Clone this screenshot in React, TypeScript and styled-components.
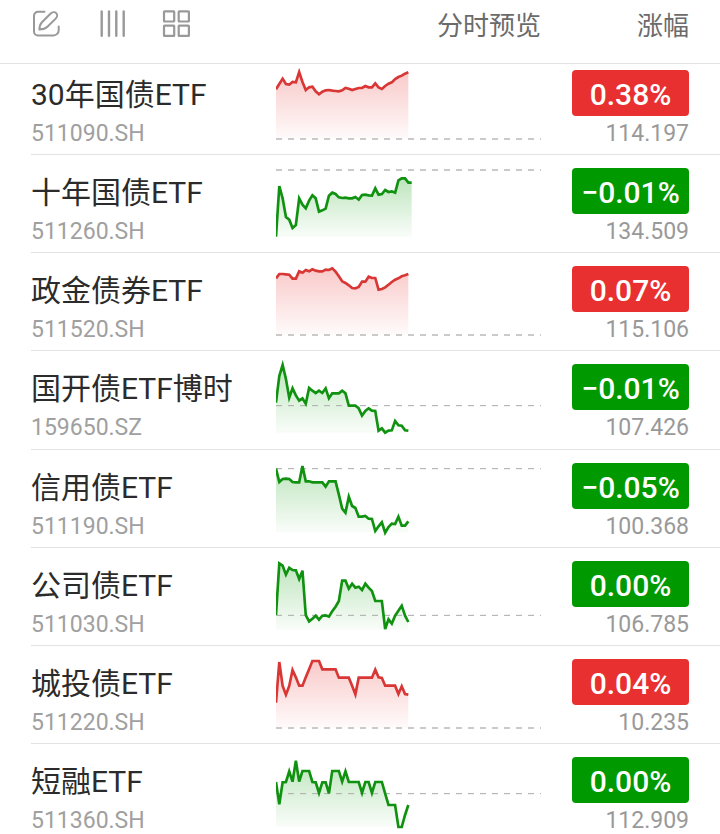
import React from "react";
import styled, { createGlobalStyle } from "styled-components";

type Trend = "up" | "down";

interface Fund {
  name: string;
  code: string;
  change: string;
  price: string;
  trend: Trend;
  /** Height of the previous close and of the area's foot, in chart units. */
  close: number;
  foot: number;
  span: number;
  points: number[];
}

const CHART_WIDTH = 795;
const CHART_HEIGHT = 291;

const lineColor = { up: "#d93636", down: "#109210" };
const badgeColor = { up: "#e93030", down: "#009a00" };

const funds: Fund[] = [
  {
    name: "30年国债ETF", code: "511090.SH", change: "0.38%", price: "114.197",
    trend: "up", close: 246, foot: 246, span: 397,
    points: [97, 81, 65, 81, 83, 75, 76, 45, 75, 99, 91, 89, 103, 112, 104, 100, 99, 101, 102, 103, 100, 93, 95, 99, 96, 93, 93, 87, 91, 91, 79, 91, 96, 87, 80, 76, 66, 60, 56, 50, 46],
  },
  {
    name: "十年国债ETF", code: "511260.SH", change: "−0.01%", price: "134.509",
    trend: "down", close: 45, foot: 246, span: 407,
    points: [245, 93, 130, 186, 194, 219, 210, 130, 149, 160, 137, 121, 130, 170, 166, 161, 122, 113, 117, 127, 129, 128, 130, 130, 126, 134, 120, 119, 121, 122, 100, 119, 117, 105, 111, 109, 113, 76, 70, 70, 83, 83],
  },
  {
    name: "政金债券ETF", code: "511520.SH", change: "0.07%", price: "115.106",
    trend: "up", close: 246, foot: 246, span: 397,
    points: [76, 63, 63, 64, 65, 77, 77, 55, 59, 51, 55, 49, 53, 55, 55, 50, 51, 46, 56, 70, 85, 90, 97, 105, 106, 102, 86, 86, 71, 75, 75, 110, 108, 103, 95, 87, 80, 76, 70, 67, 63],
  },
  {
    name: "国开债ETF博时", code: "159650.SZ", change: "−0.01%", price: "107.426",
    trend: "down", close: 164, foot: 247, span: 397,
    points: [155, 75, 42, 84, 140, 112, 133, 149, 142, 158, 111, 119, 126, 119, 126, 112, 142, 127, 127, 127, 119, 127, 164, 164, 164, 172, 194, 180, 172, 179, 180, 239, 232, 245, 239, 238, 210, 223, 224, 238, 239],
  },
  {
    name: "信用债ETF", code: "511190.SH", change: "−0.05%", price: "100.368",
    trend: "down", close: 56, foot: 247, span: 397,
    points: [56, 96, 87, 86, 87, 96, 97, 97, 48, 94, 94, 97, 97, 97, 97, 110, 94, 94, 94, 134, 176, 188, 140, 168, 174, 200, 200, 198, 206, 207, 243, 229, 217, 248, 231, 221, 222, 200, 227, 227, 214],
  },
  {
    name: "公司债ETF", code: "511030.SH", change: "0.00%", price: "106.785",
    trend: "down", close: 202, foot: 246, span: 397,
    points: [201, 46, 53, 80, 59, 66, 67, 93, 68, 201, 220, 212, 203, 215, 203, 202, 206, 190, 176, 159, 98, 98, 122, 107, 119, 116, 126, 107, 119, 129, 159, 159, 159, 243, 214, 227, 203, 188, 173, 203, 222],
  },
  {
    name: "城投债ETF", code: "511220.SH", change: "0.04%", price: "10.235",
    trend: "up", close: 246, foot: 246, span: 397,
    points: [170, 48, 120, 146, 120, 72, 94, 119, 119, 94, 70, 45, 45, 45, 70, 70, 70, 70, 70, 95, 95, 95, 95, 119, 145, 95, 95, 95, 95, 95, 71, 94, 96, 119, 119, 119, 119, 144, 121, 144, 146],
  },
  {
    name: "短融ETF", code: "511360.SH", change: "0.00%", price: "112.909",
    trend: "down", close: 149, foot: 249, span: 397,
    points: [114, 181, 115, 114, 82, 113, 50, 113, 81, 81, 81, 114, 115, 147, 115, 115, 148, 81, 81, 81, 113, 82, 114, 114, 114, 114, 147, 114, 114, 147, 114, 114, 114, 149, 183, 183, 183, 249, 249, 213, 183],
  },
];

const GlobalStyle = createGlobalStyle`
  * { box-sizing: border-box; }
  html { scrollbar-width: none; background: #fff; }
  body {
    margin: 0;
    font-family: Roboto, "Noto Sans CJK SC", sans-serif;
    color: #2b2b2b;
  }
`;

const Columns = styled.div`
  display: grid;
  grid-template-columns: minmax(0, 1fr) 265px 117px;
  column-gap: 31px;
`;

const Header = styled(Columns).attrs({ as: "header" })`
  position: sticky;
  top: 0;
  z-index: 1;
  height: 64px;
  padding: 0 31px 16px 32px;
  align-items: center;
  background: #fff;
  border-bottom: 1px solid #e3e3e3;
`;

const Tools = styled.div`
  display: flex;
  gap: 37px;
`;

const ToolButton = styled.button`
  display: flex;
  width: 28px;
  height: 28px;
  padding: 0;
  border: 0;
  background: none;
  color: #999;
  cursor: pointer;
`;

const ColumnTitle = styled.span`
  padding-top: 4px;
  font-size: 26px;
  line-height: 32px;
  font-weight: 400;
  text-align: right;
  white-space: nowrap;
  color: #6b6b6b;
`;

/* The list rests slightly scrolled beneath the header; its rows share the window's height. */
const List = styled.ul`
  display: grid;
  grid-auto-rows: minmax(98px, 1fr);
  min-height: calc(100vh - 49px);
  margin: -7px 0 0;
  padding: 0 0 0 31px;
  list-style: none;
`;

const Row = styled(Columns).attrs({ as: "li" })`
  padding-right: 31px;
  border-bottom: 1px solid #e3e3e3;
`;

const Identity = styled.div`
  display: flex;
  flex-direction: column;
  gap: 5px;
  padding-top: 18px;
  white-space: nowrap;
`;

const Name = styled.span`
  font-size: 30px;
  line-height: 40px;
`;

const Code = styled.span`
  font-size: 23px;
  line-height: 28px;
  color: #a0a0a0;
`;

const Chart = styled.svg`
  display: block;
  width: 100%;
  height: 97px;
`;

const Quote = styled.div`
  display: flex;
  flex-direction: column;
  gap: 4px;
  padding-top: 13px;
`;

const Badge = styled.span<{ $trend: Trend }>`
  height: 46px;
  padding-top: 4px;
  border-radius: 4px;
  background: ${({ $trend }) => badgeColor[$trend]};
  color: #fff;
  font-size: 30px;
  line-height: 42px;
  font-weight: 500;
  text-align: center;
`;

const Price = styled.span`
  font-size: 23px;
  line-height: 28px;
  text-align: right;
  color: #999;
`;

function EditIcon() {
  return (
    <svg width="28" height="28" viewBox="0 0 28 28" fill="none" stroke="currentColor" strokeWidth="2" strokeLinecap="round" strokeLinejoin="round">
      <path d="M12.5 1.8H6a4 4 0 0 0-4 4V21.4a4 4 0 0 0 4 4H21.5a5.2 5.2 0 0 0 5.200-5.200V16.500" />
      <path d="M7.400 19.600C7.500 16.700 8 14.200 9.900 12.300L18.700 3.500C20.400 1.800 22.800 1.700 24.200 3.100C25.600 4.500 25.400 6.900 23.700 8.600L15.400 16.800C13.400 18.700 10.500 19.400 7.400 19.600Z" />
    </svg>
  );
}

function BarsIcon() {
  return (
    <svg width="28" height="28" viewBox="0 0 28 28" fill="none" stroke="currentColor" strokeWidth="2.4" strokeLinecap="round">
      <path d="M4.700 1.500V25.700M12 1.500V25.700M19.300 1.500V25.700M26.700 1.500V25.700" />
    </svg>
  );
}

function GridIcon() {
  return (
    <svg width="28" height="28" viewBox="0 0 28 28" fill="none" stroke="currentColor" strokeWidth="2.2">
      <rect x="2" y="1.300" width="10.200" height="10.200" rx="0.500" />
      <rect x="16.700" y="1.300" width="10.200" height="10.200" rx="0.500" />
      <rect x="2" y="15.700" width="10.200" height="10.200" rx="0.500" />
      <rect x="16.700" y="15.700" width="10.200" height="10.200" rx="0.500" />
    </svg>
  );
}

function TrendChart({ fund }: { fund: Fund }) {
  const { points, span, close, foot, trend } = fund;
  const step = span / (points.length - 1);
  const line = points.map((y, i) => `${(i * step).toFixed(1)},${y}`).join(" ");
  const fillId = `fill-${fund.code}`;
  const edgeClose = close === 246 || close === 45;
  return (
    <Chart viewBox={`0 0 ${CHART_WIDTH} ${CHART_HEIGHT}`} preserveAspectRatio="none" role="img" aria-label={`${fund.name} 分时`}>
      <defs>
        <linearGradient id={fillId} gradientUnits="userSpaceOnUse" x1="0" y1={Math.min(...points)} x2="0" y2={foot}>
          <stop offset="0" stopColor={badgeColor[trend]} stopOpacity="0.26" />
          <stop offset="1" stopColor={badgeColor[trend]} stopOpacity="0.02" />
        </linearGradient>
      </defs>
      <polygon points={`0,${foot} ${line} ${span},${foot}`} fill={`url(#${fillId})`} />
      <line
        x1="0" x2={CHART_WIDTH} y1={close} y2={close}
        stroke={edgeClose ? "#cacaca" : "#aaa"}
        strokeWidth={edgeClose ? 6 : 3}
        strokeDasharray="18 18"
      />
      <polyline points={line} fill="none" stroke={lineColor[trend]} strokeWidth="8" strokeLinejoin="miter" />
    </Chart>
  );
}

export default function App() {
  return (
    <>
      <GlobalStyle />
      <Header>
        <Tools>
          <ToolButton type="button" aria-label="编辑"><EditIcon /></ToolButton>
          <ToolButton type="button" aria-label="列表"><BarsIcon /></ToolButton>
          <ToolButton type="button" aria-label="宫格"><GridIcon /></ToolButton>
        </Tools>
        <ColumnTitle>分时预览</ColumnTitle>
        <ColumnTitle>涨幅</ColumnTitle>
      </Header>
      <List>
        {funds.map((fund) => (
          <Row key={fund.code}>
            <Identity>
              <Name>{fund.name}</Name>
              <Code>{fund.code}</Code>
            </Identity>
            <TrendChart fund={fund} />
            <Quote>
              <Badge $trend={fund.trend}>{fund.change}</Badge>
              <Price>{fund.price}</Price>
            </Quote>
          </Row>
        ))}
      </List>
    </>
  );
}
